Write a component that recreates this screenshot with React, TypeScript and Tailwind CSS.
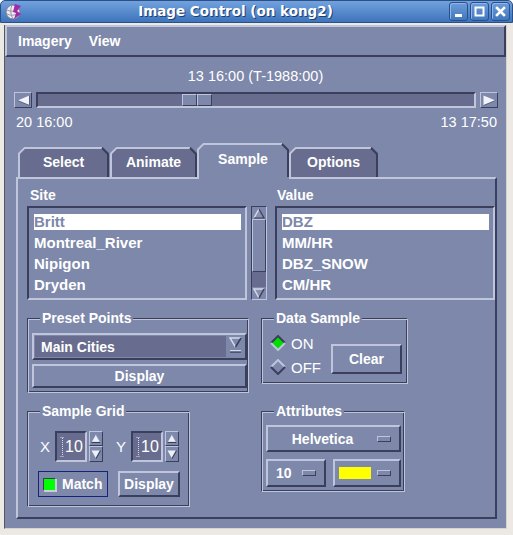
import React from "react";

const raised2 =
  "border-2 border-t-[#bfc5db] border-l-[#bfc5db] border-r-[#3a3f5c] border-b-[#3a3f5c]";
const sunken2 =
  "border-2 border-t-[#3a3f5c] border-l-[#3a3f5c] border-r-[#bfc5db] border-b-[#bfc5db]";
const raised1 =
  "border border-t-[#bfc5db] border-l-[#bfc5db] border-r-[#3a3f5c] border-b-[#3a3f5c]";
const sunken1 =
  "border border-t-[#3a3f5c] border-l-[#3a3f5c] border-r-[#bfc5db] border-b-[#bfc5db]";
const etched =
  "border border-t-[#3a3f5c] border-l-[#3a3f5c] border-r-[#bfc5db] border-b-[#bfc5db] shadow-[inset_1px_1px_0_#bfc5db,inset_-1px_-1px_0_#3a3f5c]";

function TitleBar() {
  return (
    <div className="h-[23px] flex items-center rounded-t-[5px] bg-linear-to-b from-[#72a2de] to-[#3d74bc] border border-[#2c4f85]">
      <div className="ml-[4px] w-[17px] h-[17px]">
        <svg width="17" height="17" viewBox="0 0 17 17">
          <circle cx="8" cy="9" r="7" fill="#ececf2" stroke="#7a7a8c" strokeWidth="1" />
          <path d="M2 7 Q8 10 14 6 M2 11 Q8 14 14 10 M7 2 Q4 9 8 16" stroke="#9a9aac" fill="none" strokeWidth="1" />
          <path d="M10 1 L16 3 L12 8 L16 11 L9 16 L11 10 L8 9 Z" fill="#a02aa8" />
        </svg>
      </div>
      <div className="flex-1 text-center font-['DejaVu_Sans',sans-serif] font-bold text-[13.5px] leading-none text-white [text-shadow:1px_1px_0_#1f3e6b]">
        Image Control (on kong2)
      </div>
      <div className="flex gap-[2px] mr-[2px]">
        {["min", "max", "close"].map((k) => (
          <div
            key={k}
            className="w-[19px] h-[19px] rounded-[3px] border border-[#29508e] bg-linear-to-b from-[#6c9cd9] to-[#4277bd] shadow-[inset_1px_1px_0_#8fb6e6] flex items-center justify-center"
          >
            <svg width="13" height="13" viewBox="0 0 13 13">
              {k === "min" && <rect x="3" y="9" width="7" height="3" fill="#fff" />}
              {k === "max" && (
                <rect x="2.5" y="2.5" width="8" height="8" fill="none" stroke="#fff" strokeWidth="2" />
              )}
              {k === "close" && (
                <path d="M3 3 L10 10 M10 3 L3 10" stroke="#fff" strokeWidth="2.6" strokeLinecap="square" />
              )}
            </svg>
          </div>
        ))}
      </div>
    </div>
  );
}

function Tab({ label, w, wClass, active }: { label: string; w: number; wClass: string; active?: boolean }) {
  const h = active ? 36 : 30;
  const c = 6;
  return (
    <div
      className={`relative flex items-center justify-center ${wClass} ${
        active ? "z-10 -mb-[2px] h-[36px] pb-[4px]" : "h-[30px]"
      }`}
    >
      <svg className="absolute inset-0" width={w} height={h}>
        <polygon
          points={`0,${h} 0,${c} ${c},0 ${w - c},0 ${w},${c} ${w},${h}`}
          fill={active ? "#7d88aa" : "#686c8e"}
        />
        <polyline
          points={`1,${h} 1,${c + 0.5} ${c + 0.5},1 ${w - c - 1},1`}
          fill="none"
          stroke="#bfc5db"
          strokeWidth="2"
        />
        <polyline
          points={`${w - c - 1},1 ${w - 1},${c + 1} ${w - 1},${active ? h - 2 : h}`}
          fill="none"
          stroke="#3a3f5c"
          strokeWidth="2"
        />
      </svg>
      <span className="relative font-bold text-[14px] leading-none text-white">{label}</span>
    </div>
  );
}

function ListBox({ items }: { items: string[] }) {
  return (
    <div className={`w-[220px] h-[94px] ${sunken2} pt-[3px] pl-[5px] pr-[4px]`}>
      {items.map((t, i) => (
        <div key={t} className="h-[21px] flex items-center">
          <div
            className={`h-[16px] w-full flex items-center font-bold text-[15px] leading-none ${
              i === 0 ? "bg-white text-[#7d88aa]" : "text-white"
            }`}
          >
            {t}
          </div>
        </div>
      ))}
    </div>
  );
}

function ScrollArrow({ up }: { up?: boolean }) {
  return (
    <svg width="12" height="11" viewBox="0 0 12 11">
      {up ? (
        <>
          <polygon points="6,1 11,10 1,10" fill="#8890b0" />
          <polyline points="1,10 6,1" stroke="#d4d9ea" strokeWidth="1.5" fill="none" />
          <polyline points="6,1 11,10 1,10" stroke="#3a3f5c" strokeWidth="1.2" fill="none" />
        </>
      ) : (
        <>
          <polygon points="1,1 11,1 6,10" fill="#8890b0" />
          <polyline points="6,10 1,1 11,1" stroke="#d4d9ea" strokeWidth="1.5" fill="none" />
          <polyline points="11,1 6,10" stroke="#3a3f5c" strokeWidth="1.5" fill="none" />
        </>
      )}
    </svg>
  );
}

function ScrollBar() {
  return (
    <div className={`w-[16px] h-[94px] ${sunken1} bg-[#686c8e] flex flex-col`}>
      <div className="h-[12px] bg-[#7d88aa] flex items-center justify-center">
        <ScrollArrow up />
      </div>
      <div className={`h-[53px] ${raised1} bg-[#7d88aa]`} />
      <div className="flex-1" />
      <div className="h-[12px] bg-[#7d88aa] flex items-center justify-center">
        <ScrollArrow />
      </div>
    </div>
  );
}

function Frame({ title, cls, children }: { title: string; cls: string; children?: React.ReactNode }) {
  return (
    <div className={`relative ${etched} ${cls}`}>
      <span className="absolute -top-[10px] left-[12px] px-[2px] bg-[#7d88aa] font-bold text-[14px] leading-[18px] text-white">
        {title}
      </span>
      {children}
    </div>
  );
}

function Indicator() {
  return <div className={`w-[14px] h-[6px] ${raised1} bg-[#7d88aa]`} />;
}

function Diamond({ on }: { on?: boolean }) {
  return (
    <svg width="16" height="16" viewBox="0 0 16 16">
      <polygon points="8,1 15,8 8,15 1,8" fill={on ? "#00e000" : "#7d88aa"} />
      <polyline points="1,8 8,1 15,8" fill="none" stroke={on ? "#3a3f5c" : "#bfc5db"} strokeWidth="2" />
      <polyline points="1,8 8,15 15,8" fill="none" stroke={on ? "#bfc5db" : "#3a3f5c"} strokeWidth="2" />
    </svg>
  );
}

function SpinArrows() {
  return (
    <div className="flex flex-col w-[14px]">
      <div className={`h-[15px] ${raised1} bg-[#7d88aa] flex items-center justify-center`}>
        <svg width="10" height="9" viewBox="0 0 10 9">
          <polygon points="5,0.5 9.5,8.5 0.5,8.5" fill="#eef0f6" />
          <polyline points="9.5,8.5 0.5,8.5" stroke="#3a3f5c" strokeWidth="1.2" fill="none" />
          <polyline points="5,0.5 9.5,8.5" stroke="#8d94b2" strokeWidth="1" fill="none" />
        </svg>
      </div>
      <div className={`h-[16px] ${raised1} bg-[#7d88aa] flex items-center justify-center`}>
        <svg width="10" height="9" viewBox="0 0 10 9">
          <polygon points="0.5,0.5 9.5,0.5 5,8.5" fill="#eef0f6" />
          <polyline points="9.5,0.5 5,8.5" stroke="#3a3f5c" strokeWidth="1.2" fill="none" />
        </svg>
      </div>
    </div>
  );
}

function SpinField() {
  return (
    <div className={`w-[32px] h-[31px] ${sunken2} bg-[#686c8e] flex items-center`}>
      <svg className="ml-[3px]" width="5" height="20" viewBox="0 0 5 20">
        <path d="M2.5 1 V19" stroke="#d8dcea" strokeWidth="1" strokeDasharray="1 1" />
        <path d="M0.5 0.5 H4.5 M0.5 19.5 H4.5" stroke="#d8dcea" strokeWidth="1" strokeDasharray="1 1" />
      </svg>
      <span className="text-[16px] leading-none text-white">10</span>
    </div>
  );
}

export default function App() {
  return (
    <div className="w-[513px] h-[535px] bg-white font-['Liberation_Sans',Arial,sans-serif] text-white overflow-hidden">
      <div className="w-[513px] h-[535px] bg-[#ece9e4] rounded-t-[6px] flex flex-col">
        <TitleBar />
        <div className="ml-[4px] mt-[2px] w-[503px] h-[504px] bg-[#7d88aa] border-l border-l-[#55575e] border-r border-r-[#d6d4ce] border-b border-b-[#d6d4ce] flex flex-col">
          {/* menubar */}
          <div className={`h-[32px] ${raised2} flex items-center font-bold text-[14px] leading-none`}>
            <span className="ml-[11px]">Imagery</span>
            <span className="ml-[17px]">View</span>
          </div>

          <div className="mt-[10px] h-[18px] flex items-center justify-center text-[14.5px] leading-none">
            13 16:00 (T-1988:00)
          </div>

          {/* slider */}
          <div className="mt-[7px] h-[16px] flex ml-[9px]">
            <div className={`w-[18px] h-[16px] ${raised1} bg-[#7d88aa] flex items-center justify-center`}>
              <svg width="13" height="11" viewBox="0 0 13 11">
                <polygon points="0.5,5.5 12.5,0.5 12.5,10.5" fill="#f2f3f8" />
                <polyline points="0.5,5.5 12.5,10.5 12.5,0.5" stroke="#5a6080" strokeWidth="1" fill="none" />
              </svg>
            </div>
            <div className={`ml-[4px] w-[440px] h-[16px] ${sunken2} bg-[#686c8e] flex`}>
              <div className="ml-[144px] flex h-[12px]">
                <div className={`w-[15px] h-[12px] ${raised1} bg-[#7d88aa]`} />
                <div className={`w-[15px] h-[12px] ${raised1} bg-[#7d88aa]`} />
              </div>
            </div>
            <div className={`ml-[4px] w-[18px] h-[16px] ${raised1} bg-[#7d88aa] flex items-center justify-center`}>
              <svg width="13" height="11" viewBox="0 0 13 11">
                <polygon points="12.5,5.5 0.5,0.5 0.5,10.5" fill="#f2f3f8" />
                <polyline points="12.5,5.5 0.5,10.5" stroke="#5a6080" strokeWidth="1" fill="none" />
              </svg>
            </div>
          </div>

          <div className="mt-[5px] h-[18px] flex items-center justify-between pl-[11px] pr-[9px] text-[14.5px] leading-none">
            <span>20 16:00</span>
            <span>13 17:50</span>
          </div>

          {/* tabs */}
          <div className="mt-[12px] h-[34px] flex items-end ml-[13px]">
            <Tab label="Select" w={91} wClass="w-[91px]" />
            <div className="w-[1px]" />
            <Tab label="Animate" w={87} wClass="w-[87px]" />
            <Tab label="Sample" w={92} wClass="w-[92px]" active />
            <Tab label="Options" w={89} wClass="w-[89px]" />
          </div>

          {/* panel */}
          <div className={`ml-[11px] w-[481px] h-[342px] ${raised2} pl-[9px] flex flex-col`}>
            <div className="mt-[7px] flex">
              <div className="flex flex-col">
                <div className="h-[18px] flex items-center pl-[3px] font-bold text-[14px] leading-none">Site</div>
                <div className="mt-[2px] flex">
                  <ListBox items={["Britt", "Montreal_River", "Nipigon", "Dryden"]} />
                  <div className="ml-[4px]">
                    <ScrollBar />
                  </div>
                </div>
              </div>
              <div className="ml-[8px] flex flex-col">
                <div className="h-[18px] flex items-center pl-[2px] font-bold text-[14px] leading-none">Value</div>
                <div className="mt-[2px]">
                  <ListBox items={["DBZ", "MM/HR", "DBZ_SNOW", "CM/HR"]} />
                </div>
              </div>
            </div>

            {/* row 2 */}
            <div className="mt-[18px] h-[75px] flex items-start">
              <Frame title="Preset Points" cls="w-[222px] h-[75px] pt-[14px] pl-[4px]">
                <div className={`w-[215px] h-[27px] ${raised2} flex`}>
                  <div className="ml-[1px] mt-[1px] w-[191px] h-[21px] bg-[#686c8e] flex items-center pl-[6px] font-bold text-[14px] leading-none">
                    Main Cities
                  </div>
                  <div className="ml-[3px] mt-[2px]">
                    <svg width="13" height="17" viewBox="0 0 13 17">
                      <polygon points="1,1 12,1 6.5,10" fill="#7d88aa" />
                      <polyline points="6.5,10 1,1 12,1" stroke="#d4d9ea" strokeWidth="1.5" fill="none" />
                      <polyline points="12,1 6.5,10" stroke="#3a3f5c" strokeWidth="1.5" fill="none" />
                      <rect x="1" y="13" width="11" height="1.5" fill="#d4d9ea" />
                      <rect x="1" y="14.5" width="11" height="1.2" fill="#3a3f5c" />
                    </svg>
                  </div>
                </div>
                <div className={`mt-[4px] w-[215px] h-[24px] ${raised2} flex items-center justify-center font-bold text-[14px] leading-none`}>
                  Display
                </div>
              </Frame>

              <Frame title="Data Sample" cls="ml-[12px] w-[147px] h-[66px] pt-[12px] flex">
                <div className="ml-[8px] w-[61px] flex flex-col">
                  <div className="h-[24px] flex items-center">
                    <Diamond on />
                    <span className="ml-[5px] text-[15px] leading-none">ON</span>
                  </div>
                  <div className="h-[24px] flex items-center">
                    <Diamond />
                    <span className="ml-[5px] text-[15px] leading-none">OFF</span>
                  </div>
                </div>
                <div className={`mt-[13px] w-[71px] h-[30px] ${raised2} flex items-center justify-center font-bold text-[14px] leading-none`}>
                  Clear
                </div>
              </Frame>
            </div>

            {/* row 3 */}
            <div className="mt-[18px] flex items-start">
              <Frame title="Sample Grid" cls="w-[163px] h-[96px] pt-[19px]">
                <div className="flex items-center h-[31px] ml-[12px]">
                  <span className="w-[15px] text-[15px] leading-none">X</span>
                  <SpinField />
                  <div className="ml-[2px]">
                    <SpinArrows />
                  </div>
                  <span className="ml-[13px] w-[15px] text-[15px] leading-none">Y</span>
                  <SpinField />
                  <div className="ml-[2px]">
                    <SpinArrows />
                  </div>
                </div>
                <div className="mt-[9px] ml-[10px] flex">
                  <div className="w-[70px] h-[26px] border border-[#18237e] flex items-center">
                    <div className="ml-[4px] w-[13px] h-[13px] bg-[#00ff00] border border-t-[#3a3f5c] border-l-[#3a3f5c] border-r-[#c7cce0] border-b-[#c7cce0] shadow-[1px_1px_0_#c7cce0]" />
                    <span className="ml-[6px] font-bold text-[14px] leading-none">Match</span>
                  </div>
                  <div className={`ml-[10px] w-[62px] h-[26px] ${raised2} flex items-center justify-center font-bold text-[14px] leading-none`}>
                    Display
                  </div>
                </div>
              </Frame>

              <Frame title="Attributes" cls="ml-[71px] w-[144px] h-[81px] pt-[13px] pl-[4px]">
                <div className={`w-[135px] h-[27px] ${raised2} flex items-center`}>
                  <span className="flex-1 text-center font-bold text-[14px] leading-none">Helvetica</span>
                  <div className="mr-[8px]">
                    <Indicator />
                  </div>
                </div>
                <div className="mt-[7px] flex">
                  <div className={`w-[60px] h-[28px] ${raised2} flex items-center justify-between pl-[8px] pr-[8px]`}>
                    <span className="font-bold text-[14px] leading-none">10</span>
                    <Indicator />
                  </div>
                  <div className={`ml-[7px] w-[68px] h-[28px] ${raised2} flex items-center justify-between pl-[4px] pr-[8px]`}>
                    <div className="w-[32px] h-[12px] bg-[#ffff00]" />
                    <Indicator />
                  </div>
                </div>
              </Frame>
            </div>
          </div>
        </div>
      </div>
    </div>
  );
}
